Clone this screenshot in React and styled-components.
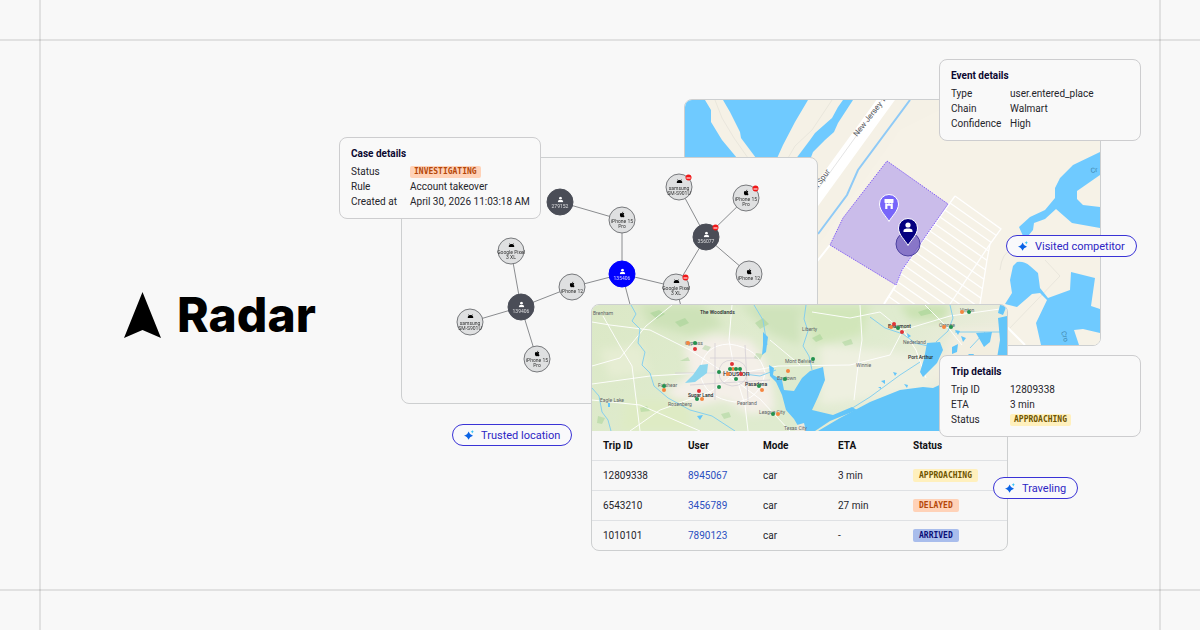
import React from "react";
import styled, { createGlobalStyle, css } from "styled-components";

const GlobalStyle = createGlobalStyle`
  *, *::before, *::after { box-sizing: border-box; }
  body { margin: 0; background: #f8f8f8; }
`;

const sans = `Roboto, "Liberation Sans", sans-serif`;
const mono = `"DejaVu Sans Mono", "Liberation Mono", monospace`;

/* ---------- page ---------- */

const Page = styled.main`
  position: relative;
  display: flex;
  align-items: center;
  justify-content: space-between;
  min-height: 100vh;
  padding: 0 59px 0 124px;
  background: #f8f8f8;
  color: #25252b;
  font-family: ${sans};
  overflow: hidden;

  &::before,
  &::after {
    content: "";
    position: absolute;
    border: 0 solid rgba(0, 0, 0, 0.09);
    pointer-events: none;
  }
  &::before { inset: 0 39px; border-width: 0 2px; }
  &::after { inset: 39px 0; border-width: 2px 0; }
`;

const Brand = styled.h1`
  display: flex;
  align-items: center;
  gap: 16px;
  margin: 0;
  color: #000;
  font: 800 48px/58px Inter, sans-serif;
`;

const Canvas = styled.div`
  position: relative;
  flex: none;
  width: 802px;
  height: 512px;
`;

/* Places a window on the free canvas. */
const Placed = styled.div`
  position: absolute;
  left: ${(p) => p.$x}px;
  top: ${(p) => p.$y}px;
`;

const Window = styled(Placed).attrs({ as: "section" })`
  width: 417px;
  height: 247px;
  border: 1px solid #cdcfd0;
  border-radius: 8px;
  background: #f7f7f7;
  overflow: hidden;
`;

const MapArt = styled.svg`
  display: block;
  width: 100%;
  height: ${(p) => p.$height};
`;

/* ---------- detail cards ---------- */

const Card = styled(Placed).attrs({ as: "section" })`
  width: 202px;
  padding: 9px 11px;
  border: 1px solid #cdcdcf;
  border-radius: 8px;
  background: #f9f9f9;
`;

const CardTitle = styled.h2`
  margin: 0 0 3px;
  color: #0b0830;
  font-size: 10px;
  font-weight: 700;
  line-height: 14px;
`;

const Facts = styled.dl`
  display: grid;
  grid-template-columns: 59px 1fr;
  margin: 0;
  font-size: 10px;
  line-height: 15px;

  dt, dd { margin: 0; white-space: nowrap; }
`;

const tones = {
  orange: css`background: #ffd2b8; color: #b54708;`,
  yellow: css`background: #fff0bd; color: #6e5400;`,
  blue: css`background: #a9bdec; color: #0b0f78;`,
};

const Badge = styled.span`
  display: inline-block;
  padding: 0 ${(p) => (p.$wide ? 6 : 4)}px;
  border-radius: 2px;
  font: 700 8px/${(p) => (p.$wide ? 13 : 12)}px ${mono};
  vertical-align: middle;
  ${(p) => tones[p.$tone]}
`;

function Details({ x, y, title, rows }) {
  return (
    <Card $x={x} $y={y}>
      <CardTitle>{title}</CardTitle>
      <Facts>
        {rows.map(([name, value, tone]) => (
          <React.Fragment key={name}>
            <dt>{name}</dt>
            <dd>{tone ? <Badge $tone={tone}>{value}</Badge> : value}</dd>
          </React.Fragment>
        ))}
      </Facts>
    </Card>
  );
}

/* ---------- pills ---------- */

const PillBox = styled(Placed)`
  display: flex;
  align-items: center;
  gap: 7px;
  height: 22px;
  padding: 0 11px;
  border: 1px solid #3a33d6;
  border-radius: 11px;
  background: #f9f9fb;
  color: #2d25c4;
  font-size: 11px;
  white-space: nowrap;
`;

function Pill({ x, y, children }) {
  return (
    <PillBox $x={x} $y={y}>
      <svg width="10" height="10" viewBox="0 0 10 10" aria-hidden="true">
        <path d="M4.500 1.600 Q5.500 4.800 9 5.700 Q5.500 6.600 4.500 9.800 Q3.600 6.600 0 5.700 Q3.600 4.800 4.500 1.600Z" fill="#0b63e6" />
        <path d="M8.300 0 Q8.600 1.500 10 1.800 Q8.600 2.100 8.300 3.600 Q8 2.100 6.600 1.800 Q8 1.500 8.300 0Z" fill="#35c3f5" />
      </svg>
      {children}
    </PillBox>
  );
}

/* ---------- device graph ---------- */

const nodes = [
  { id: "u1", x: 158, y: 44, kind: "user", label: ["279152"] },
  { id: "ip1", x: 220, y: 62, kind: "apple", label: ["iPhone 15", "Pro"] },
  { id: "px1", x: 109, y: 93, kind: "android", label: ["Google Pixel", "3 XL"] },
  { id: "me", x: 220, y: 116, kind: "active", label: ["135406"] },
  { id: "ip2", x: 170, y: 129, kind: "apple", label: ["iPhone 12"] },
  { id: "u2", x: 119, y: 149, kind: "user", label: ["139406"] },
  { id: "sm1", x: 68, y: 164, kind: "android", label: ["samsung", "SM-S901U"] },
  { id: "ip3", x: 135, y: 201, kind: "apple", label: ["iPhone 15", "Pro"] },
  { id: "sm2", x: 277, y: 29, kind: "android", label: ["samsung", "SM-S901U"], flagged: true },
  { id: "ip4", x: 344, y: 40, kind: "apple", label: ["iPhone 15", "Pro"], flagged: true },
  { id: "u3", x: 304, y: 79, kind: "user", label: ["356077"], flagged: true },
  { id: "px2", x: 274, y: 129, kind: "android", label: ["Google Pixel", "3 XL"], flagged: true },
  { id: "ip5", x: 347, y: 116, kind: "apple", label: ["iPhone 12"] },
];

const edges = [
  ["u1", "ip1"], ["ip1", "me"], ["me", "ip2"], ["ip2", "u2"], ["u2", "px1"],
  ["u2", "sm1"], ["u2", "ip3"], ["me", "px2"], ["px2", "u3"], ["u3", "sm2"],
  ["u3", "ip4"], ["u3", "ip5"],
];

const NodeDot = styled.div`
  position: absolute;
  left: ${(p) => p.$x}px;
  top: ${(p) => p.$y}px;
  display: flex;
  flex-direction: column;
  align-items: center;
  justify-content: center;
  width: 27px;
  height: 27px;
  border: 1px solid ${(p) => ({ user: "#4a4d57", active: "#0000ff" }[p.$kind] || "#77797c")};
  border-radius: 50%;
  background: ${(p) => ({ user: "#4a4d57", active: "#0000ff" }[p.$kind] || "#dfe0e1")};
  color: ${(p) => (p.$kind === "user" || p.$kind === "active" ? "#fff" : "#000")};
  font-size: 5px;
  line-height: 5px;
  white-space: nowrap;
  transform: translate(-50%, -50%);

  svg { margin-bottom: 1px; }
  span { opacity: 0.8; }
`;

const Flag = styled.i`
  position: absolute;
  top: 0;
  right: 0;
  display: flex;
  align-items: center;
  justify-content: center;
  width: 6px;
  height: 6px;
  border-radius: 50%;
  background: #f01818;

  &::before { content: ""; width: 4px; height: 1px; background: #fff; }
`;

const icons = {
  person: (
    <>
      <circle cx="8" cy="4.500" r="3.600" />
      <path d="M1 15 V13 C1 10 4 9 8 9 C12 9 15 10 15 13 V15Z" />
    </>
  ),
  apple: (
    <path d="M11.2 8.500c0-2 1.600-2.900 1.700-3-1-1.400-2.400-1.500-2.900-1.500-1.200-.1-2.400.7-3 .7-.6 0-1.600-.7-2.600-.7C2.600 4 1 5.500 1 8.600 1 11.900 3.200 16 5 16c.9 0 1.300-.6 2.500-.6s1.500.6 2.500.6c1.700 0 3-3 3.400-4.200-1.300-.6-2.200-1.700-2.200-3.300zM9.300 2.700C9.900 2 10.300 1 10.200 0 9.300 0 8.300.6 7.700 1.300 7.200 1.900 6.700 2.900 6.900 3.900c.9 0 1.800-.5 2.400-1.200z" />
  ),
  android: (
    <path d="M3.200 2 L4.800 4.800 A8 8 0 0 1 11.200 4.800 L12.800 2 L13.800 2.600 L12.300 5.300 A8 8 0 0 1 16 12 H0 A8 8 0 0 1 3.700 5.300 L2.200 2.600Z" />
  ),
};

function DeviceGraph() {
  const at = Object.fromEntries(nodes.map((n) => [n.id, n]));
  return (
    <Window $x={62} $y={98} aria-label="Linked devices">
      <MapArt $height="100%" viewBox="0 0 415 245" stroke="#8a8c8f" strokeWidth="1" aria-hidden="true">
        {edges.map(([a, b]) => (
          <line key={a + b} x1={at[a].x} y1={at[a].y} x2={at[b].x} y2={at[b].y} />
        ))}
        <line x1="220" y1="116" x2="230" y2="154" />
        <line x1="274" y1="129" x2="281" y2="156" />
      </MapArt>
      {nodes.map((n) => (
        <NodeDot key={n.id} $x={n.x} $y={n.y} $kind={n.kind}>
          <svg width="6" height="6" viewBox="0 0 16 16" fill="currentColor" aria-hidden="true">
            {icons[n.kind] || icons.person}
          </svg>
          {n.label.map((line) => (
            <span key={line}>{line}</span>
          ))}
          {n.flagged && <Flag />}
        </NodeDot>
      ))}
    </Window>
  );
}

/* ---------- place map ---------- */

const Pin = ({ x, y, fill, children }) => (
  <g transform={`translate(${x} ${y})`}>
    <path
      d="M0 17.500 C-2.500 12.500 -9.500 7 -9.500 0 A9.500 9.500 0 0 1 9.500 0 C9.500 7 2.500 12.500 0 17.500Z"
      fill={fill}
      stroke="#fff"
      strokeWidth="1"
    />
    {children}
  </g>
);

const aisles = Array.from({ length: 18 }, (_, i) => i);

function PlaceMap() {
  return (
    <Window $x={345} $y={40} aria-label="Place map">
      <MapArt $height="100%" viewBox="685 100 415 245" preserveAspectRatio="none" fontFamily={sans}>
        <defs>
          <clipPath id="lot">
            <path d="M955 196 L1001 229 L990 244 L987 260 L980 304 L885 304 L902 270Z" />
          </clipPath>
        </defs>
        <rect x="685" y="100" width="415" height="245" fill="#f5f1e6" />
        <path d="M815 250 L900 130 L960 100 L1100 100 V345 H815Z" fill="#f6f2e7" />
        <g fill="none" stroke="#e9e6dc" strokeWidth="1">
          <path d="M715 100 L722 118 L734 138 L748 158" />
          <path d="M832 100 L812 130 L795 146 L788 158" />
          <path d="M1000 270 Q1002 252 1012 250 M1045 260 L1060 276 L1035 302 L1008 330" />
        </g>
        <g fill="#6fcaff">
          <path d="M685 100 H705 L711 110 V122 L722 140 L737 158 V165 H685Z" />
          <path d="M723 100 L730 112 L740 132 L741 138 L756 158 V165 H774 L783 145 L795 122 L808 100Z" />
          <path d="M795 160 L810 140 L815 133 L832 118 L838 107 L843 100 H853 L838 123 L834 132 L825 140 L813 152 L810 160Z" />
          <path d="M1100 152 L1073 165 L1060 178 L1055 188 V198 L1045 210 L1030 217 L1019 227 L1023 236 H1028 L1033 230 L1034 223 L1045 219 L1056 209 L1072 223 L1100 228 V207 L1083 205 L1077 199 V191 L1100 175Z" />
          <path d="M1017 262 Q1024 261 1030 266 L1038 273 L1040 288 L1048 298 L1070 290 L1071 272 L1095 278 L1091 306 L1100 309 V333 L1083 329 L1074 330 L1079 345 H1041 L1036 323 L1047 300 L1040 293 L1032 294 L1017 307 L1005 304 L1012 293 L1010 280 L1013 266Z" />
        </g>
        <path d="M808 207 L890 94" stroke="#fff" strokeWidth="15" />
        <path d="M808 203 L862 128 L882 100" stroke="#e4e4e4" strokeWidth="1" fill="none" />
        <path d="M910 100 L858 170 L847 195 L818 234" stroke="#8fcaf6" strokeWidth="2" fill="none" />
        <path d="M830 245 L815 264 M896 285 L884 304 M1007 327 L1025 345" stroke="#fff" strokeWidth="2" fill="none" />
        <g fill="none" stroke="#fff" strokeWidth="1.300">
          <path d="M955 196 L1001 229 L990 244 L987 260 L980 304 M955 196 L902 270 L896 285" />
          <path d="M990 244 L950 304" />
          <g clipPath="url(#lot)">
            {aisles.map((i) => {
              const x = 950 - i * 5;
              const y = 203 + i * 7;
              return <path key={i} d={`M${x} ${y} l120 84`} />;
            })}
          </g>
        </g>
        <path
          d="M887 161 L948 204 L902 270 L896 285 L830 245 L843 218Z"
          fill="#8d73ee"
          fillOpacity="0.420"
          stroke="#8460f5"
          strokeWidth="1"
          strokeDasharray="1.500 1"
        />
        <circle cx="908" cy="244" r="12" fill="#5b48b0" fillOpacity="0.600" stroke="#4c41a0" />
        <Pin x={889} y={204} fill="#7765fa">
          <path d="M-4.500 -5 H4.500 V-1.500 Q3.800 -.3 2.800 -.3 Q1.900 -.3 1.500 -1 Q.8 -.2 0 -.2 Q-.8 -.2 -1.500 -1 Q-1.900 -.3 -2.800 -.3 Q-3.800 -.3 -4.500 -1.500Z M-3.800 0 H3.800 V5 H1.600 V1.800 H-1.600 V5 H-3.800Z" fill="#fff" />
        </Pin>
        <Pin x={908} y={228} fill="#050080">
          <circle cy="-3" r="2.600" fill="#fff" />
          <path d="M-4.500 4 V3 C-4.500 .8 -2 .6 0 .6 C2 .6 4.500 .8 4.500 3 V4Z" fill="#fff" />
        </Pin>
        <g fill="#56585c" fontSize="8">
          <text transform="translate(857 137) rotate(-52)">New Jersey T</text>
          <text transform="translate(817 190) rotate(-54)">n Spur</text>
        </g>
        <g fill="#3f86ad" fontSize="7">
          <text transform="translate(1091 173) rotate(-8)">Cr</text>
          <text transform="translate(1061 332) rotate(72)">Cro</text>
        </g>
      </MapArt>
    </Window>
  );
}

/* ---------- trips map and table ---------- */

const dots = {
  "#f5853f": [[688, 343], [733, 369], [728, 374], [664, 390], [702, 399], [762, 390], [788, 371], [778, 414], [891, 327], [944, 327], [962, 312]],
  "#23924f": [[695, 343], [730, 369], [736, 369], [740, 369], [719, 372], [736, 379], [719, 387], [664, 386], [697, 399], [759, 386], [785, 379], [773, 414], [813, 359], [898, 328], [951, 327], [969, 312]],
  "#e03338": [[695, 349], [732, 364], [741, 374], [699, 391], [894, 324], [902, 332]],
};

const towns = [
  [593, 315, "Brenham"], [600, 402, "Eagle Lake"], [668, 406, "Rosenberg"], [658, 387, "Fulshear"],
  [685, 345, "Cypress"], [737, 405, "Pearland"], [759, 414, "League City"], [784, 430, "Texas City"],
  [785, 363, "Mont Belvieu"], [777, 380, "Baytown"], [802, 331, "Liberty"], [903, 344, "Nederland"],
  [856, 367, "Winnie"], [939, 327, "Orange"], [960, 312, "Vinton"],
];

const cities = [
  [700, 314, "The Woodlands"], [688, 397, "Sugar Land"], [745, 386, "Pasadena"],
  [888, 328, "Beaumont"], [908, 359, "Port Arthur"],
];

function TripsMap() {
  return (
    <MapArt $height="126px" viewBox="592 305 415 126" preserveAspectRatio="xMidYMid slice" fontFamily={sans}>
      <defs>
        <linearGradient id="land" x1="0" y1="0" x2="1" y2="0.300">
          <stop offset="0" stopColor="#dbe8c6" />
          <stop offset="0.450" stopColor="#dfebce" />
          <stop offset="0.700" stopColor="#dfebcf" />
          <stop offset="1" stopColor="#eeecdf" />
        </linearGradient>
        <filter id="soft" x="-20%" y="-20%" width="140%" height="140%">
          <feGaussianBlur stdDeviation="4" />
        </filter>
      </defs>
      <rect x="592" y="305" width="415" height="126" fill="url(#land)" />
      <g filter="url(#soft)">
        <path d="M684 345 L715 335 L750 340 L765 360 L772 385 L775 410 L750 415 L725 400 L690 408 L665 392 L690 375Z" fill="#f4efe8" />
        <path d="M820 345 L880 350 L940 360 L930 390 L860 400 L820 405Z" fill="#eef0e0" />
        <path d="M955 330 L1007 330 V380 H930Z" fill="#f2eee0" />
        <path d="M640 305 L700 305 L725 325 L690 335 L650 325Z" fill="#cde2b8" />
        <path d="M740 305 L800 305 L800 345 L772 335Z" fill="#cfe3bb" />
        <path d="M800 305 H870 L862 335 L815 345Z" fill="#d1e6ba" />
        <path d="M900 305 H950 L945 320 L910 320Z" fill="#cae2b2" />
        <path d="M600 350 L640 345 L650 372 L610 378Z" fill="#e6edd3" />
        <path d="M625 400 H690 V431 H620Z" fill="#deebc4" />
      </g>
      <path
        d="M650 313 l9 -3 6 4 -8 5z M675 322 l10 -4 4 5 -9 4z M755 323 l8 -5 6 6 -9 5z M705 345 l6 2 -3 4 -6 -2z M756 353 l7 1 -3 6 -6 -2z M842 342 l9 -3 2 5 -8 2z M918 312 l12 -4 3 5 -12 3z M640 408 l7 -2 3 5 -9 1z M721 414 l8 -2 2 5 -7 2z M812 338 l8 -4 3 5 -7 3z M680 361 l8 -4 2 4z M598 416 l7 2 -3 6 -5 -1z"
        fill="#8cc97d"
        fillOpacity="0.350"
      />
      <g fill="none" stroke="#fff" strokeOpacity="0.900" strokeWidth="1">
        <path d="M592 384 L650 376 L700 373 L740 373 L778 366 L850 365 L890 355 L903 330 L950 316 L1007 308" />
        <path d="M592 322 L610 325 L650 330 L690 350 L725 373 L760 399 L790 431" />
        <path d="M732 305 L729 340 L735 373 L745 405 L748 431" />
        <path d="M736 373 L710 392 L660 410 L630 431" />
        <path d="M592 366 L620 358 L646 326 L672 305 M603 316 L620 346 L632 366 L640 431" />
        <path d="M700 373 Q702 345 729 344 Q760 348 765 373 Q760 400 735 402 Q704 398 700 373" />
        <path d="M860 305 L862 340 L858 366 L854 400 M903 330 L916 350 L926 378 M902 330 L880 312 L850 318 L812 312" />
        <path d="M592 400 L640 405 L700 431 M770 340 L800 365 M925 305 L950 330 L962 345" />
      </g>
      <g fill="none" stroke="#d5d0d6" strokeOpacity="0.800" strokeWidth="1">
        <path d="M675 373 H765 M715 343 V400 M745 345 L748 400 M690 385 L770 380 M710 358 H757" />
        <path d="M719 373 Q719 360 733 360 Q747 361 747 374 Q745 386 732 386 Q719 384 719 373" />
      </g>
      <g fill="none" stroke="#86cfee" strokeWidth="1">
        <path d="M631 305 L636 314 L632 321 L640 329 L638 343 L645 352 L642 365 L650 373 L654 386 L668 398 L690 410 L712 416 L735 431" />
        <path d="M592 388 L599 396 L602 412 L608 420 L611 431" />
        <path d="M806 305 L804 319 L808 331 L803 346 L809 356 L812 370" />
        <path d="M950 305 L953 318 L948 331 L936 342 M870 317 L885 328 L903 334 L915 343 L928 346" />
        <path d="M846 412 L870 397 L900 375 L920 362 M754 305 L763 320 L767 345" />
        <path d="M955 332 H1002 M985 332 L970 348 M744 374 L760 376 L776 370" />
      </g>
      <g fill="#63c5f9">
        <path d="M685 383 L693 375 L700 365 L708 364 L707 373 L695 382Z" fill="#8dd6ee" />
        <path d="M763 332 L768 337 L766 352 L762 355 L763 345Z" />
        <path d="M769 365 L774 368 L773 375 L782 380 L784 390 L794 391 L802 378 L810 371 L823 367 L825 380 L818 397 L812 410 L833 415 L852 407 L857 410 L830 421 L815 431 H801 L794 419 L786 410 L782 395 L776 382 L770 376Z" />
        <path d="M818 431 L840 418 L870 402 L900 390 L923 387 L933 388 L950 380 L1007 370 V431Z" />
        <path d="M927 343 L940 342 L943 350 L937 363 L923 377 L920 372 L924 359Z" />
        <path d="M998 318 L1007 316 V358 H997 L1000 340Z M976 333 L992 332 L990 342 L984 347 L980 340Z M952 347 L958 344 L957 352 L952 354Z M955 330 L960 331 L958 335Z" />
        <path d="M1000 305 L1007 305 L1003 315 L998 313Z M697 416 L703 415 L700 420Z M608 403 h2 v4 h-2z M881 381 l4 -1 0 4z M893 372 l4 1 -2 3z M904 384 l4 1 -1 3z M878 387 l3 0 0 2z M907 333 l4 3 -3 2z M961 336 l5 2 -3 4z M968 354 h6 l-2 4z" />
      </g>
      <path d="M795 431 L797 425 L804 423 L806 431Z" fill="#eceade" />
      <g fill="#5c6366" fontSize="5">
        {towns.map(([x, y, name]) => (
          <text key={name} x={x} y={y}>{name}</text>
        ))}
      </g>
      <g fill="#23292b" fontSize="5" fontWeight="500">
        {cities.map(([x, y, name]) => (
          <text key={name} x={x} y={y}>{name}</text>
        ))}
      </g>
      <text x="723" y="376" fill="#1f2528" fontSize="7">Houston</text>
      {Object.entries(dots).map(([colour, points]) => (
        <g key={colour} fill={colour}>
          {points.map(([x, y]) => (
            <circle key={`${x}-${y}`} cx={x} cy={y} r="2" />
          ))}
        </g>
      ))}
    </MapArt>
  );
}

const Table = styled.table`
  width: 100%;
  border-collapse: collapse;
  table-layout: fixed;
  font-size: 10px;
  text-align: left;
`;

const HeadCell = styled.th`
  width: ${(p) => p.$width};
  height: 29px;
  padding: 1px 0 0 11px;
  color: #101014;
  font-weight: 700;
`;

const Cell = styled.td`
  height: 30px;
  padding: 0 0 0 11px;
  border-top: 1px solid #dfe1e4;
`;

const UserLink = styled.a`
  color: #2b4fc0;
  text-decoration: none;
`;

const trips = [
  ["12809338", "8945067", "car", "3 min", "APPROACHING", "yellow"],
  ["6543210", "3456789", "car", "27 min", "DELAYED", "orange"],
  ["1010101", "7890123", "car", "-", "ARRIVED", "blue"],
];

function TripsWindow() {
  return (
    <Window $x={252} $y={245} aria-label="Trips">
      <TripsMap />
      <Table>
        <thead>
          <tr>
            <HeadCell $width="85px">Trip ID</HeadCell>
            <HeadCell $width="75px">User</HeadCell>
            <HeadCell $width="75px">Mode</HeadCell>
            <HeadCell $width="75px">ETA</HeadCell>
            <HeadCell>Status</HeadCell>
          </tr>
        </thead>
        <tbody>
          {trips.map(([id, user, mode, eta, status, tone]) => (
            <tr key={id}>
              <Cell>{id}</Cell>
              <Cell><UserLink href={`#${user}`}>{user}</UserLink></Cell>
              <Cell>{mode}</Cell>
              <Cell>{eta}</Cell>
              <Cell><Badge $wide $tone={tone}>{status}</Badge></Cell>
            </tr>
          ))}
        </tbody>
      </Table>
    </Window>
  );
}

export default function App() {
  return (
    <>
      <GlobalStyle />
      <Page>
        <Brand>
          <svg width="37" height="46" viewBox="0 0 37 46" aria-hidden="true">
            <path d="M18.500 0 L37 46 L18.500 38 L0 46Z" fill="#000" />
          </svg>
          Radar
        </Brand>
        <Canvas>
          <PlaceMap />
          <DeviceGraph />
          <TripsWindow />
          <Details
            x={0}
            y={78}
            title="Case details"
            rows={[
              ["Status", "INVESTIGATING", "orange"],
              ["Rule", "Account takeover"],
              ["Created at", "April 30, 2026 11:03:18 AM"],
            ]}
          />
          <Details
            x={600}
            y={0}
            title="Event details"
            rows={[
              ["Type", "user.entered_place"],
              ["Chain", "Walmart"],
              ["Confidence", "High"],
            ]}
          />
          <Details
            x={600}
            y={296}
            title="Trip details"
            rows={[
              ["Trip ID", "12809338"],
              ["ETA", "3 min"],
              ["Status", "APPROACHING", "yellow"],
            ]}
          />
          <Pill x={667} y={176}>Visited competitor</Pill>
          <Pill x={113} y={365}>Trusted location</Pill>
          <Pill x={654} y={418}>Traveling</Pill>
        </Canvas>
      </Page>
    </>
  );
}
